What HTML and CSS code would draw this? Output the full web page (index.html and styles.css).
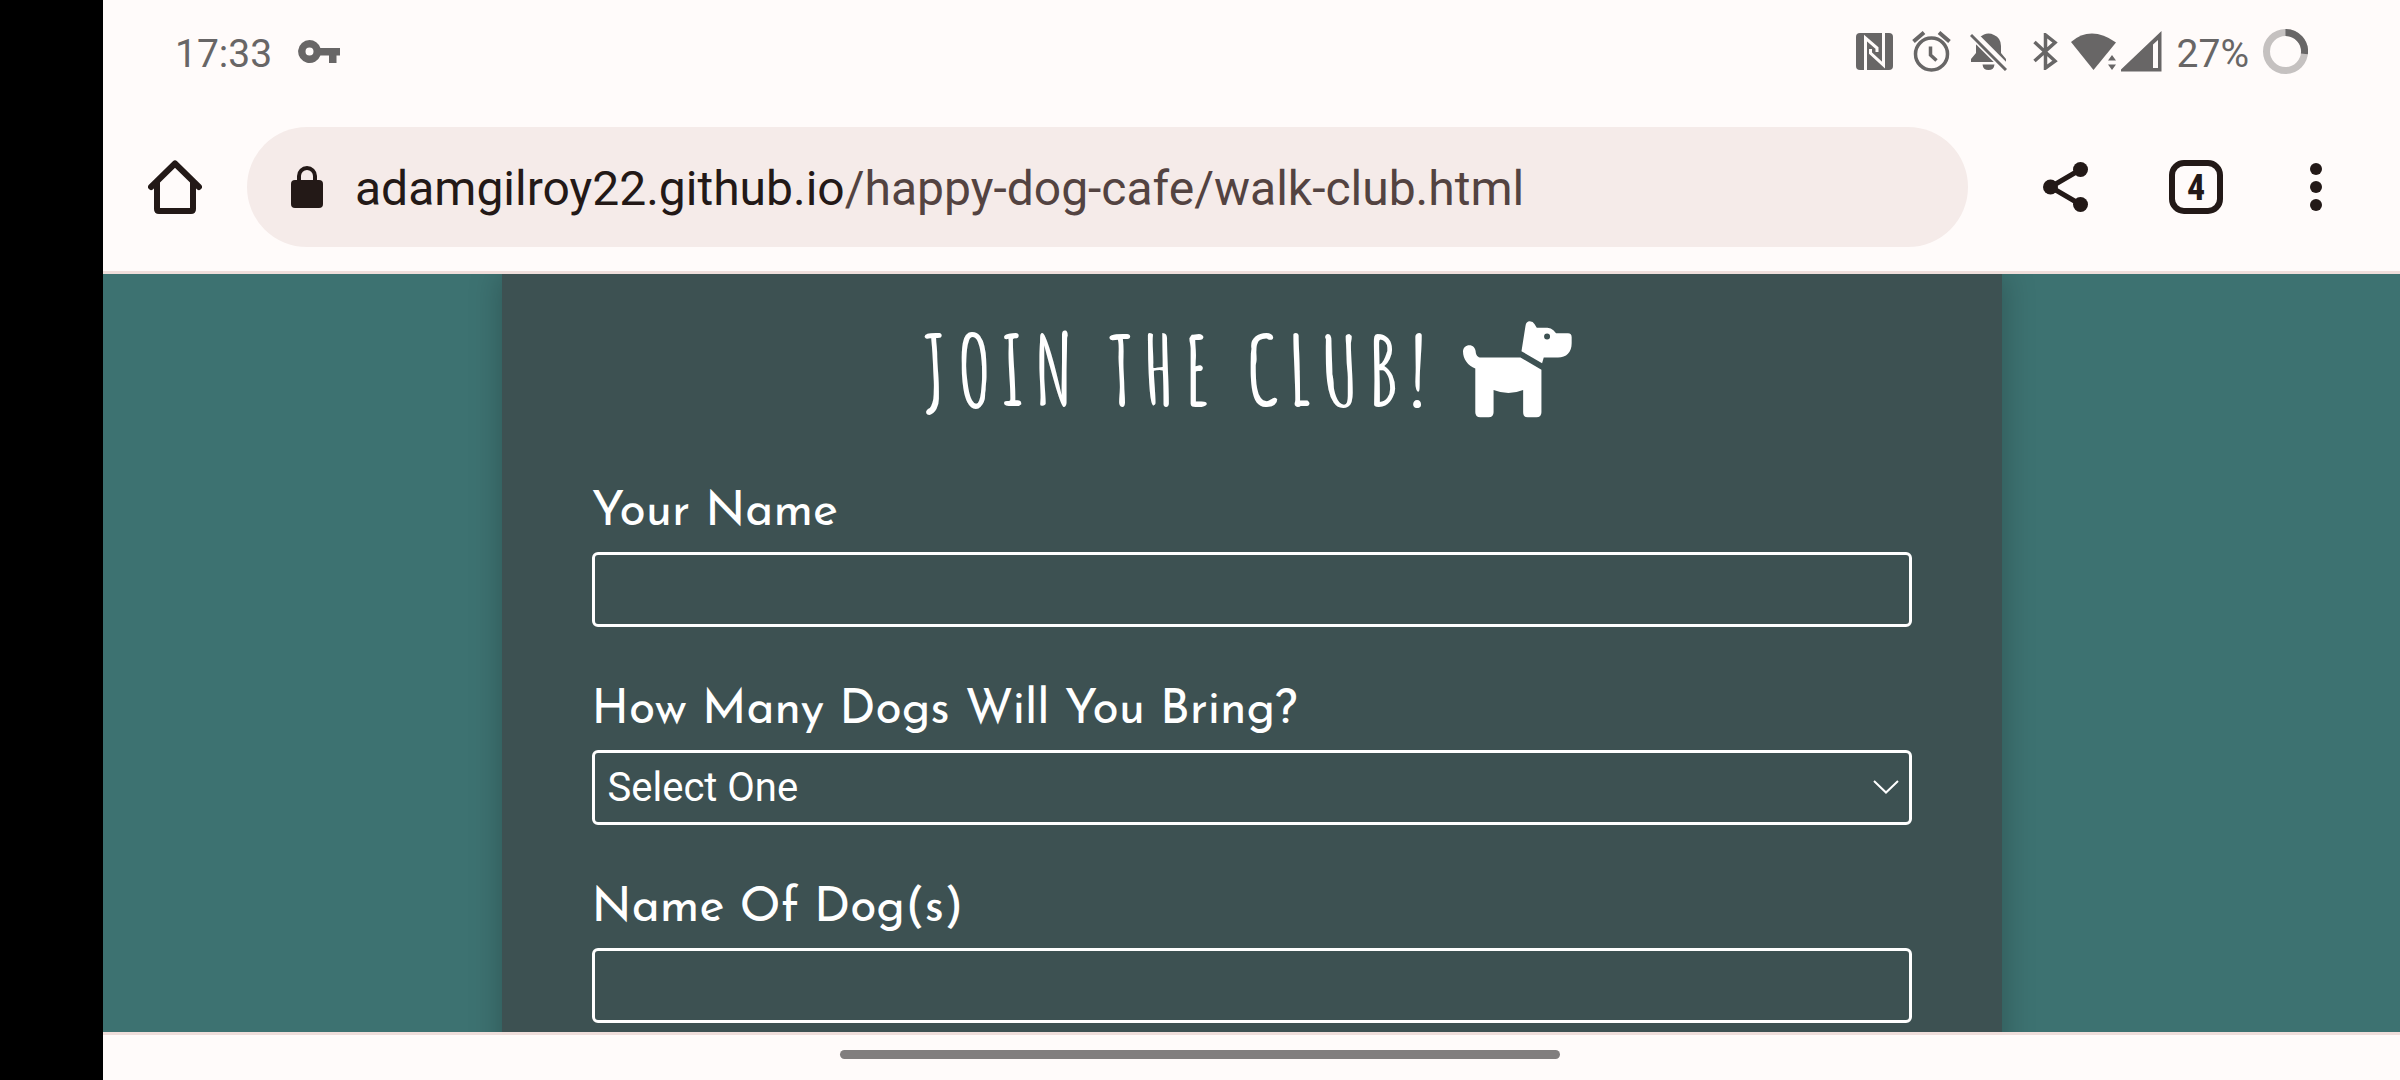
FILE: index.html
```html
<!DOCTYPE html>
<html lang="en">
<head>
<meta charset="utf-8">
<meta name="viewport" content="width=device-width, initial-scale=1">
<title>Happy Dog Cafe - Walk Club</title>
<link rel="stylesheet" href="styles.css">
</head>
<body>
<div class="cutout"></div>
<div class="screen">
  <header class="status">
    <span class="status-text">17:33</span>
    <svg class="key" width="42" height="24" viewBox="0 0 42 24"><path fill-rule="evenodd" d="M11.500 0A11.500 11.500 0 1 0 22.400 15.500H31V23H38.500V15.500H42V8H22.400A11.500 11.500 0 0 0 11.500 0ZM11.500 7.500A4 4 0 1 1 11.500 15.500A4 4 0 1 1 11.500 7.500Z"/></svg>
    <div class="alerts">
      <svg width="37" height="37" viewBox="0 0 37 37"><rect width="37" height="37" rx="4"/><path class="cut" d="M9.500 38V5L21 15V19M27.500 -1V32L14.500 20V16"/></svg>
      <svg width="39" height="41" viewBox="0 0 39 41"><g class="line"><circle cx="19.500" cy="23" r="16" stroke-width="3.500"/><path stroke-width="4" d="M1.500 10.500L12 1.500M27 1.500L37.500 10.500"/><path stroke-width="3.500" d="M18.500 15.500V24L24.500 29.500"/></g></svg>
      <svg width="37" height="38" viewBox="0 0 37 38"><path d="M5 29H1V26L6 20V13Q6 5 14 1.500Q19 -.5 24 2Q31 5 31 13V20L36 26V29Z"/><path d="M12.500 31.500H24.500Q24 37 18.500 37Q13 37 12.500 31.500Z"/><path class="cut-wide" d="M-1 -2L39 38"/><path class="line" stroke-width="3" d="M1 2L36 37"/></svg>
    </div>
    <div class="radios">
      <svg width="25" height="37" viewBox="0 0 25 37"><path class="line" stroke-width="3.500" d="M1.500 9L22 28L12.500 35V2L22 9.500L1.500 28"/></svg>
      <svg width="45" height="38" viewBox="0 0 45 38"><path d="M0 9Q20 -8 45 9.500L22.500 37Z"/><path d="M41 22L45 27.500H37ZM37 31.500H45L41 37Z"/></svg>
      <svg class="signal" width="41" height="41" viewBox="0 0 41 41"><path fill-rule="evenodd" d="M40.500 0V40.500H0V38.500ZM37 9V37H32V13.500Z"/></svg>
    </div>
    <span class="status-text percent">27%</span>
    <svg width="45" height="45" viewBox="0 0 45 45"><g fill="none" stroke-width="7"><circle cx="22.500" cy="22.500" r="19" stroke="#c5c1c0"/><path stroke="#686666" d="M22.500 3.500A19 19 0 0 1 41.400 24.900"/></g></svg>
  </header>

  <nav class="toolbar" aria-label="Browser">
    <button class="home" type="button" aria-label="Home"><svg width="54" height="54" viewBox="0 0 54 54" fill="none" stroke="#231917" stroke-width="6" stroke-linecap="round" stroke-linejoin="round"><path d="M3 27L27 3.500L51 27M9 22V49Q9 51 11 51H43Q45 51 45 49V22"/></svg></button>
    <div class="address">
      <svg width="32" height="42" viewBox="0 0 32 42"><rect y="14" width="32" height="28" rx="4" fill="#231917"/><path d="M8 16V10A8 8 0 0 1 24 10V16" fill="none" stroke="#231917" stroke-width="4"/></svg>
      <span class="url">adamgilroy22.github.io<span class="path">/happy-dog-cafe/walk-club.html</span></span>
    </div>
    <button class="share" type="button" aria-label="Share"><svg width="45" height="50" viewBox="0 0 45 50" fill="#231917"><circle cx="7.500" cy="25" r="7.500"/><circle cx="37.500" cy="7.500" r="7.500"/><circle cx="37.500" cy="42.500" r="7.500"/><path d="M37.500 7.500L7.500 25L37.500 42.500" fill="none" stroke="#231917" stroke-width="5"/></svg></button>
    <button type="button" aria-label="Open tabs"><span class="tab-count">4</span></button>
    <button type="button" aria-label="Menu"><svg width="12" height="48" viewBox="0 0 12 48" fill="#231917"><circle cx="6" cy="6" r="6"/><circle cx="6" cy="24" r="6"/><circle cx="6" cy="42" r="6"/></svg></button>
  </nav>

  <main class="page">
    <form class="club">
      <h1>Join The Club! <svg width="109" height="97" viewBox="69 62 328 290"><path d="M69 153C69 141 78 134 88 134C99 134 106 142 107 152C108 164 113 171 124 171H242L305 208V336Q305 351 290 351H264Q250 351 250 336V269Q206 287 161 269V336Q161 351 146 351H121Q106 351 106 336V204C84 196 69 176 69 153Z"/><path fill-rule="evenodd" d="M245 152L257 76Q259 62 270 62Q280 62 284 70L291 81H323Q334 81 341 89L349 98H385Q396 98 396 110V128C396 155 380 171 355 171H312L307 188ZM313 108A9 9 0 1 0 331 108A9 9 0 1 0 313 108Z"/></svg></h1>
      <div class="group">
        <label for="name">Your Name</label>
        <input class="field" id="name" type="text">
      </div>
      <div class="group">
        <label for="count">How Many Dogs Will You Bring?</label>
        <div class="select">
          <select class="field" id="count"><option>Select One</option><option>1</option><option>2</option><option>3</option></select>
          <svg class="chevron" width="26" height="14" viewBox="0 0 26 14"><path d="M1 1L13 12.500L25 1" fill="none" stroke="#fff" stroke-width="2"/></svg>
        </div>
      </div>
      <div class="group">
        <label for="dogs">Name Of Dog(s)</label>
        <input class="field" id="dogs" type="text">
      </div>
    </form>
  </main>

  <footer class="gesture"><div class="handle"></div></footer>
</div>
</body>
</html>
```
FILE: styles.css
```css
* {
  box-sizing: border-box;
}

body {
  margin: 0;
  height: 100vh;
  display: flex;
  overflow: hidden;
  background: #fffbfa;
  font-family: Roboto, sans-serif;
}

svg {
  display: block;
  flex: none;
}

.cutout {
  flex: none;
  width: 103px;
  background: #000;
}

.screen {
  flex: 1;
  min-width: 0;
  display: flex;
  flex-direction: column;
}

/* Status bar */
.status {
  flex: none;
  height: 103px;
  padding: 0 92px 0 72px;
  display: flex;
  align-items: center;
  color: #686666;
  fill: #686666;
}

.status-text {
  padding-top: 4px;
  font-size: 39px;
  line-height: 48px;
}

.key {
  margin-left: 26px;
}

.alerts {
  display: flex;
  align-items: center;
  gap: 19px;
  margin-left: auto;
}

.radios {
  display: flex;
  align-items: center;
  gap: 13px;
  margin-left: 26px;
}

.signal {
  margin-left: -8px;
}

.percent {
  margin: 0 14px 0 15px;
}

.line {
  fill: none;
  stroke: #686666;
}

.cut {
  fill: none;
  stroke: #fffbfa;
  stroke-width: 3;
}

.cut-wide {
  fill: none;
  stroke: #fffbfa;
  stroke-width: 9;
}

/* Browser toolbar */
.toolbar {
  flex: none;
  padding: 24px 24px 24px 0;
  display: flex;
  align-items: center;
  border-bottom: 3px solid #efdedb;
}

.toolbar button {
  width: 120px;
  height: 120px;
  padding: 0;
  border: 0;
  background: none;
  display: grid;
  place-items: center;
}

.toolbar .home {
  width: 144px;
}

.toolbar .share {
  width: 142px;
  margin-left: 26px;
}

.address {
  flex: 1;
  min-width: 0;
  height: 120px;
  padding: 0 44px;
  display: flex;
  align-items: center;
  gap: 32px;
  border-radius: 60px;
  background: #f5ebe9;
}

.url {
  padding-top: 4px;
  font-size: 48px;
  line-height: 56px;
  color: #231917;
  white-space: nowrap;
}

.path {
  color: #534341;
}

.tab-count {
  width: 54px;
  height: 54px;
  border: 6px solid #231917;
  border-radius: 15px;
  font-family: "Roboto Condensed", Roboto, sans-serif;
  font-size: 36px;
  font-weight: 700;
  line-height: 44px;
  text-align: center;
  color: #231917;
}

/* Web page */
.page {
  flex: 1;
  min-height: 0;
  overflow: hidden;
  display: flex;
  justify-content: center;
  background: #3d7271;
}

.club {
  width: 1500px;
  max-width: 100%;
  height: max-content;
  min-height: 100%;
  padding: 47px 90px 60px;
  display: flex;
  flex-direction: column;
  gap: 55px;
  background: #3d5152;
  box-shadow: 0 0 30px rgba(0, 0, 0, 0.25);
  color: #fff;
}

h1 {
  margin: 0 0 12px;
  padding-right: 8px;
  display: flex;
  justify-content: center;
  align-items: center;
  gap: 27px;
  height: 96px;
  font-family: "Amatic SC", "Liberation Sans Narrow", sans-serif;
  font-size: 96px;
  font-weight: 700;
  letter-spacing: 9px;
  text-transform: uppercase;
  white-space: nowrap;
  fill: #fff;
}

.group {
  display: flex;
  flex-direction: column;
  gap: 10px;
}

label {
  font-family: "Josefin Sans", Lato, sans-serif;
  font-size: 48px;
  line-height: 58px;
}

.field {
  display: block;
  width: 100%;
  height: 75px;
  padding: 0 13px;
  border: 3px solid #fff;
  border-radius: 6px;
  background: transparent;
  color: #fff;
  font-family: Roboto, sans-serif;
  font-size: 40px;
  appearance: none;
}

.select {
  position: relative;
}

.chevron {
  position: absolute;
  right: 13px;
  top: 30px;
}

/* Gesture navigation */
.gesture {
  flex: none;
  height: 48px;
  padding: 15px 103px 0 0;
  border-top: 3px solid #efdedb;
}

.handle {
  width: 720px;
  max-width: 60%;
  height: 9px;
  margin: 0 auto;
  border-radius: 5px;
  background: #817e7e;
}
```
